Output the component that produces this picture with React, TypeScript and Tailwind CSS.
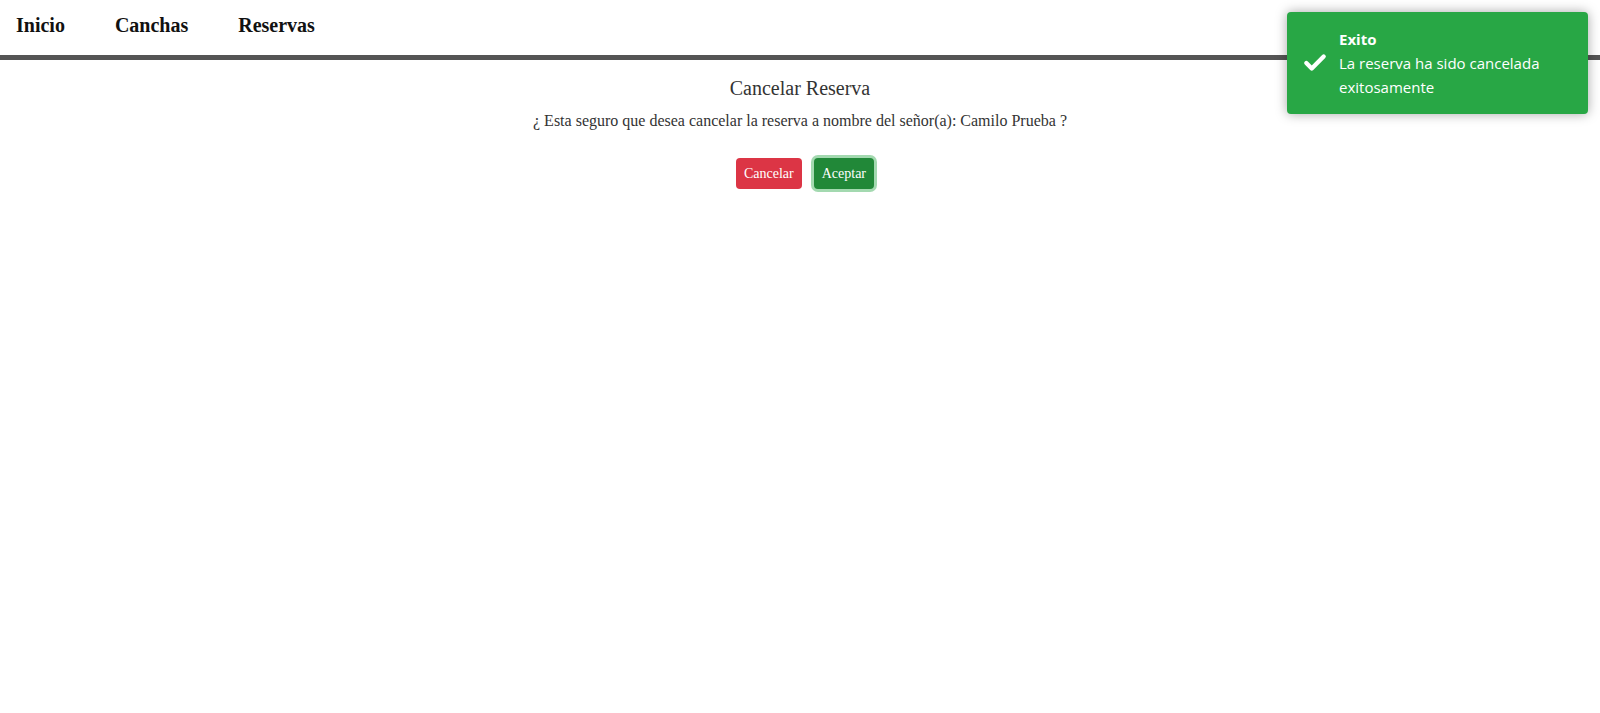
import { Check } from 'lucide-react';

function Toast() {
  return (
    <div className="absolute right-[12px] top-[12px] flex w-[301px] items-center rounded-[4px] bg-[#28a745] py-[15px] pl-[15px] pr-4 text-white shadow-[0_0_12px_rgba(0,0,0,0.35)] [font-family:'Open_Sans','Noto_Sans',sans-serif]">
      <Check className="mr-[11px] h-[26px] w-[26px] shrink-0" strokeWidth={4} />
      <div className="text-[15px] leading-[24px]">
        <p className="font-bold">Exito</p>
        <p>La reserva ha sido cancelada exitosamente</p>
      </div>
    </div>
  );
}

export default function App() {
  return (
    <div className="relative min-h-[713px] bg-white [font-family:'Liberation_Serif','Times_New_Roman',serif]">
      <nav className="flex h-[60px] items-center gap-[50px] border-b-[5px] border-[#555555] pb-[6px] pl-4 text-[20px] font-bold text-[#111]">
        <a href="#">Inicio</a>
        <a href="#">Canchas</a>
        <a href="#">Reservas</a>
      </nav>

      <div className="flex flex-col items-center text-[#333]">
        <h5 className="mt-[16px] text-[20px] leading-[24px]">Cancelar Reserva</h5>
        <p className="mt-[10px] text-[16px] leading-[22px]">
          ¿ Esta seguro que desea cancelar la reserva a nombre del señor(a): Camilo Prueba ?
        </p>
        <div className="ml-[10px] mt-[26px] flex gap-[12px]">
          <button className="h-[31px] rounded-[4px] bg-[#dc3545] px-2 text-[14px] text-white">
            Cancelar
          </button>
          <button className="h-[31px] rounded-[4px] bg-[#218838] px-2 text-[14px] text-white shadow-[0_0_0_3px_rgba(72,180,97,0.5)]">
            Aceptar
          </button>
        </div>
      </div>

      <Toast />
    </div>
  );
}
